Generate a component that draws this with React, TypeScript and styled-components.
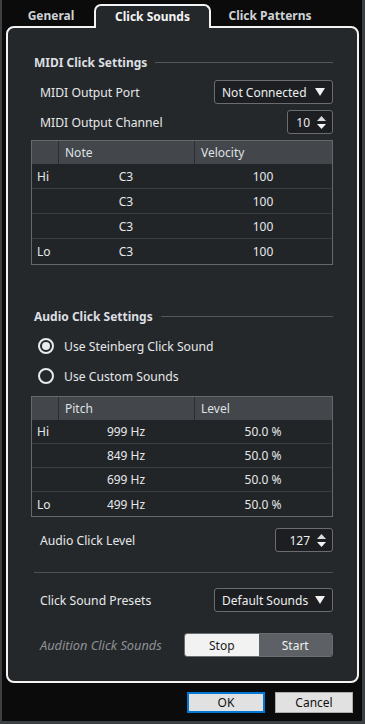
import React from "react";
import styled, { createGlobalStyle } from "styled-components";

const GlobalStyle = createGlobalStyle`
  html, body {
    margin: 0;
    padding: 0;
    background: #3d4043;
  }
  body {
    font-family: "Noto Sans", "Open Sans", sans-serif;
    font-size: 12px;
    color: #e6e6e6;
  }
`;

const Window = styled.div`
  width: 360px;
  height: 721px;
  margin-left: 2px;
  background: #0b0b0b;
  display: flex;
  flex-direction: column;
`;

const TabBar = styled.div`
  height: 26px;
  display: flex;
  align-items: flex-end;
  padding-left: 6px;
`;

const Tab = styled.div<{ $w: number; $active?: boolean }>`
  width: ${(p) => p.$w}px;
  box-sizing: border-box;
  height: ${(p) => (p.$active ? 24 : 22)}px;
  display: flex;
  align-items: center;
  justify-content: center;
  font-weight: 700;
  font-size: 12px;
  color: ${(p) => (p.$active ? "#f4f4f4" : "#cfd3d6")};
  ${(p) =>
    p.$active &&
    `
    position: relative;
    z-index: 1;
    margin-bottom: -2px;
    padding-bottom: 2px;
    background: #25282b;
    border: 2px solid #f4f4f4;
    border-bottom: none;
    border-radius: 7px 7px 0 0;
  `}
`;

const Panel = styled.div`
  margin: 0 3px 0 4px;
  height: 657px;
  box-sizing: border-box;
  border: 2px solid #f4f4f4;
  border-radius: 8px;
  background: #25282b;
  padding: 0 24px 0 23px;
  display: flex;
  flex-direction: column;
`;

const SectionHeader = styled.div<{ $mt: number }>`
  margin-top: ${(p) => p.$mt}px;
  height: 20px;
  display: flex;
  align-items: center;
  padding-left: 3px;
  font-weight: 700;
  font-size: 12px;
  color: #dcdfe2;
  &::after {
    content: "";
    flex: 1;
    height: 1px;
    margin-left: 8px;
    background: #54575a;
  }
`;

const FieldRow = styled.div<{ $mt: number }>`
  margin-top: ${(p) => p.$mt}px;
  height: 24px;
  display: flex;
  align-items: center;
  justify-content: space-between;
  padding-left: 9px;
`;

const Label = styled.span<{ $muted?: boolean }>`
  color: ${(p) => (p.$muted ? "#8d9094" : "#e6e8ea")};
  font-style: ${(p) => (p.$muted ? "italic" : "normal")};
  font-size: ${(p) => (p.$muted ? 12.8 : 12.2)}px;
`;

const Dropdown = styled.div`
  width: 119px;
  height: 24px;
  box-sizing: border-box;
  border: 1px solid #6a6d70;
  border-radius: 3px;
  background: #1c1e21;
  display: flex;
  align-items: center;
  justify-content: space-between;
  padding: 0 7px 0 7px;
  color: #eceef0;
`;

const Spinner = styled.div<{ $w: number }>`
  width: ${(p) => p.$w}px;
  height: 24px;
  box-sizing: border-box;
  border: 1px solid #6a6d70;
  border-radius: 3px;
  background: #1c1e21;
  display: flex;
  align-items: center;
  justify-content: flex-end;
  gap: 7px;
  padding-right: 6px;
  color: #eceef0;
`;

const Table = styled.div<{ $mt: number }>`
  margin-top: ${(p) => p.$mt}px;
  border: 1px solid #66696c;
  display: grid;
  grid-template-columns: 26px 136px 1fr;
`;

const HeadCell = styled.div`
  height: 23px;
  background: #43464a;
  display: flex;
  align-items: center;
  padding-left: 6px;
  color: #dfe2e5;
  & + & {
    border-left: 1px solid #2b2e31;
  }
`;

const Cell = styled.div<{ $h: number; $center?: boolean; $last?: boolean }>`
  height: ${(p) => p.$h}px;
  box-sizing: border-box;
  border-bottom: ${(p) => (p.$last ? "none" : "1px solid #3a3d41")};
  background: #222528;
  display: flex;
  align-items: center;
  justify-content: ${(p) => (p.$center ? "center" : "flex-start")};
  padding-left: ${(p) => (p.$center ? 0 : 5)}px;
  color: #e6e8ea;
`;

const RadioRow = styled.div`
  margin-top: 10px;
  height: 20px;
  display: flex;
  align-items: center;
  padding-left: 7px;
  gap: 10px;
`;

const RadioCircle = styled.span<{ $checked?: boolean }>`
  width: 16px;
  height: 16px;
  box-sizing: border-box;
  border-radius: 50%;
  border: 2px solid #e8eaec;
  display: flex;
  align-items: center;
  justify-content: center;
  &::after {
    content: "";
    width: 8px;
    height: 8px;
    border-radius: 50%;
    background: ${(p) => (p.$checked ? "#e8eaec" : "transparent")};
  }
`;

const Divider = styled.div`
  margin: 20px 0 0 3px;
  height: 1px;
  background: #4e5154;
`;

const Segmented = styled.div`
  width: 149px;
  height: 24px;
  display: flex;
  border-radius: 3px;
  overflow: hidden;
  border: 1px solid #6a6d70;
  box-sizing: border-box;
`;

const SegButton = styled.div<{ $on?: boolean }>`
  flex: 1;
  display: flex;
  align-items: center;
  justify-content: center;
  background: ${(p) => (p.$on ? "#f2f2f2" : "#5d6064")};
  color: ${(p) => (p.$on ? "#1b1b1b" : "#f0f0f0")};
`;

const ButtonBar = styled.div`
  display: flex;
  justify-content: flex-end;
  gap: 10px;
  padding: 9px 9px 0 0;
`;

const DialogButton = styled.div<{ $primary?: boolean }>`
  width: 78px;
  height: 21px;
  box-sizing: border-box;
  background: #e1e1e1;
  border: ${(p) => (p.$primary ? "2px solid #0078d7" : "1px solid #adadad")};
  display: flex;
  align-items: center;
  justify-content: center;
  color: #111;
  font-family: "Noto Sans", sans-serif;
  font-size: 12px;
`;

const DownArrow = () => (
  <svg width="10" height="8" viewBox="0 0 10 8">
    <polygon points="0,0 10,0 5,8" fill="#f0f0f0" />
  </svg>
);

const UpDown = () => (
  <svg width="9" height="13" viewBox="0 0 9 13">
    <polygon points="4.5,0 9,5 0,5" fill="#d8dadc" />
    <polygon points="0,8 9,8 4.5,13" fill="#f4f4f4" />
  </svg>
);

type Row = { tag: string; a: string; b: string };

const DataTable: React.FC<{ mt: number; head: [string, string]; rows: Row[]; rowH: number }> = ({
  mt,
  head,
  rows,
  rowH,
}) => (
  <Table $mt={mt}>
    <HeadCell />
    <HeadCell>{head[0]}</HeadCell>
    <HeadCell>{head[1]}</HeadCell>
    {rows.map((r, i) => {
      const last = i === rows.length - 1;
      return (
        <React.Fragment key={i}>
          <Cell $h={rowH} $last={last}>{r.tag}</Cell>
          <Cell $h={rowH} $last={last} $center>{r.a}</Cell>
          <Cell $h={rowH} $last={last} $center>{r.b}</Cell>
        </React.Fragment>
      );
    })}
  </Table>
);

const midiRows: Row[] = [
  { tag: "Hi", a: "C3", b: "100" },
  { tag: "", a: "C3", b: "100" },
  { tag: "", a: "C3", b: "100" },
  { tag: "Lo", a: "C3", b: "100" },
];

const audioRows: Row[] = [
  { tag: "Hi", a: "999 Hz", b: "50.0 %" },
  { tag: "", a: "849 Hz", b: "50.0 %" },
  { tag: "", a: "699 Hz", b: "50.0 %" },
  { tag: "Lo", a: "499 Hz", b: "50.0 %" },
];

const App: React.FC = () => {
  return (
    <>
      <GlobalStyle />
      <Window>
        <TabBar>
          <Tab $w={86}>General</Tab>
          <Tab $w={117} $active>Click Sounds</Tab>
          <Tab $w={118}>Click Patterns</Tab>
        </TabBar>
        <Panel>
          <SectionHeader $mt={24}>MIDI Click Settings</SectionHeader>
          <FieldRow $mt={8}>
            <Label>MIDI Output Port</Label>
            <Dropdown>
              <span>Not Connected</span>
              <DownArrow />
            </Dropdown>
          </FieldRow>
          <FieldRow $mt={6}>
            <Label>MIDI Output Channel</Label>
            <Spinner $w={46}>
              <span>10</span>
              <UpDown />
            </Spinner>
          </FieldRow>
          <DataTable mt={6} head={["Note", "Velocity"]} rows={midiRows} rowH={25} />

          <SectionHeader $mt={41}>Audio Click Settings</SectionHeader>
          <RadioRow>
            <RadioCircle $checked />
            <Label>Use Steinberg Click Sound</Label>
          </RadioRow>
          <RadioRow>
            <RadioCircle />
            <Label>Use Custom Sounds</Label>
          </RadioRow>
          <DataTable mt={10} head={["Pitch", "Level"]} rows={audioRows} rowH={24} />
          <FieldRow $mt={11}>
            <Label>Audio Click Level</Label>
            <Spinner $w={58}>
              <span>127</span>
              <UpDown />
            </Spinner>
          </FieldRow>

          <Divider />
          <FieldRow $mt={15}>
            <Label>Click Sound Presets</Label>
            <Dropdown>
              <span>Default Sounds</span>
              <DownArrow />
            </Dropdown>
          </FieldRow>
          <FieldRow $mt={21}>
            <Label $muted>Audition Click Sounds</Label>
            <Segmented>
              <SegButton $on>Stop</SegButton>
              <SegButton>Start</SegButton>
            </Segmented>
          </FieldRow>
        </Panel>
        <ButtonBar>
          <DialogButton $primary>OK</DialogButton>
          <DialogButton>Cancel</DialogButton>
        </ButtonBar>
      </Window>
    </>
  );
};

export default App;
